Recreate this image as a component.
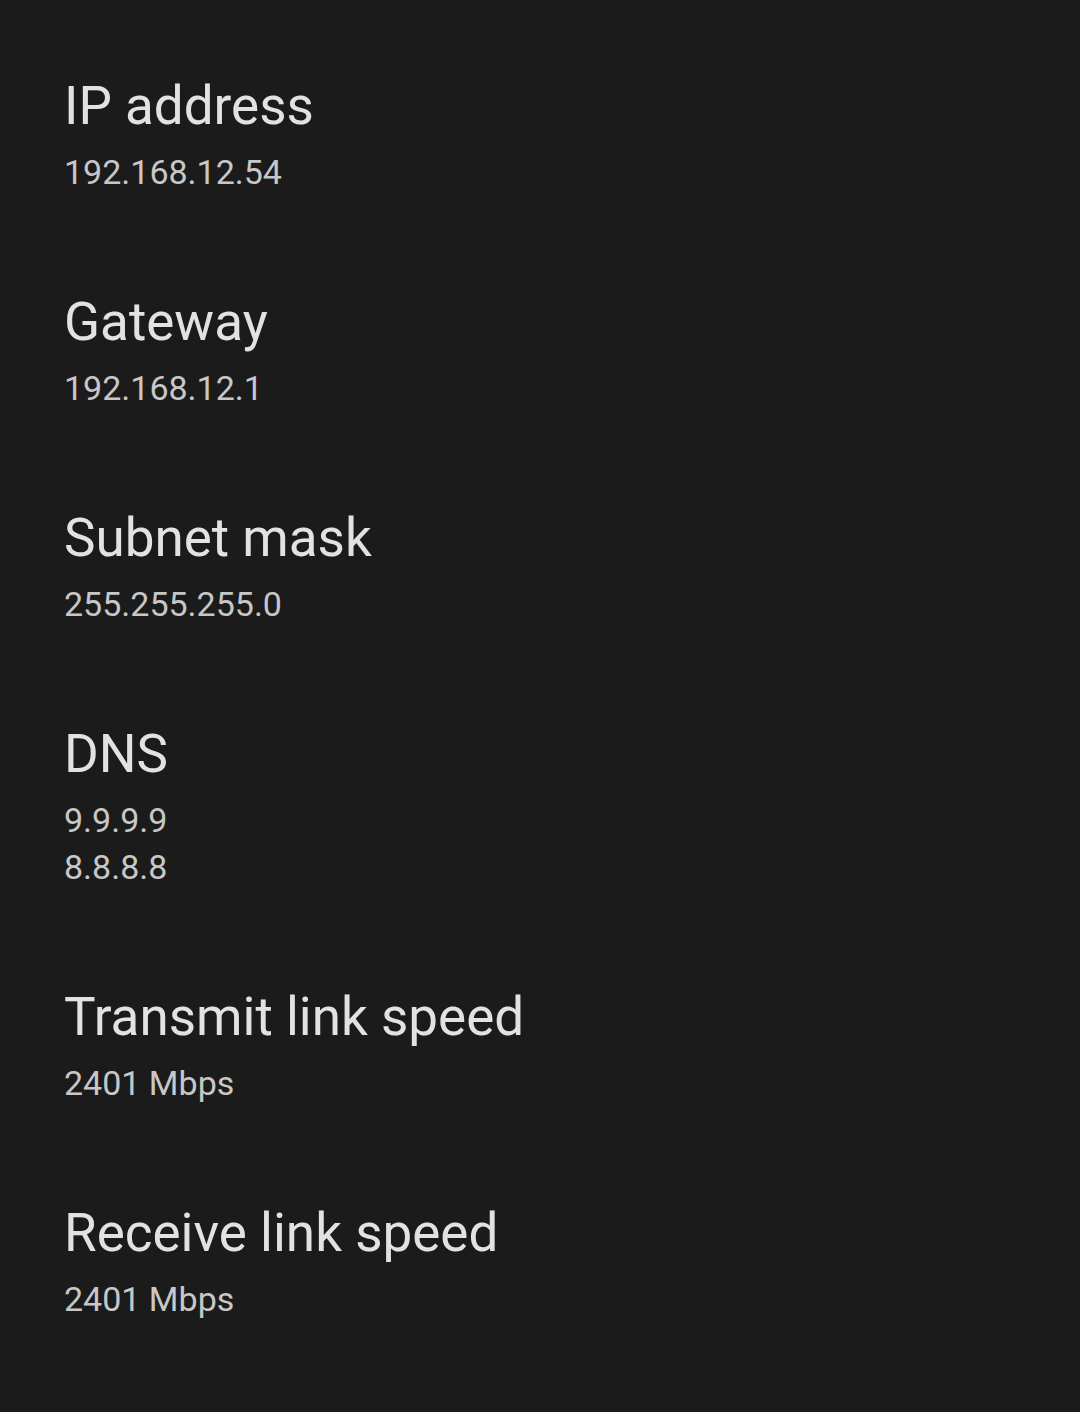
import React from 'react';

const items = [
  { label: 'IP address', values: ['192.168.12.54'] },
  { label: 'Gateway', values: ['192.168.12.1'] },
  { label: 'Subnet mask', values: ['255.255.255.0'] },
  { label: 'DNS', values: ['9.9.9.9', '8.8.8.8'] },
  { label: 'Transmit link speed', values: ['2401 Mbps'] },
  { label: 'Receive link speed', values: ['2401 Mbps'] },
];

const App = () => {
  return (
    <div
      className="min-h-[1412px] w-full bg-[#1b1b1b] pt-[27px]"
      style={{ fontFamily: 'Roboto, "Open Sans", sans-serif' }}
    >
      {items.map((item) => (
        <div key={item.label} className="px-[64px] py-[47px]">
          <div className="text-[53px] leading-[64px] text-[#e2e2e2]">{item.label}</div>
          <div className="mt-[11px]">
            {item.values.map((v) => (
              <div key={v} className="text-[34px] leading-[47px] text-[#c7c7c7]">
                {v}
              </div>
            ))}
          </div>
        </div>
      ))}
    </div>
  );
};

export default App;
